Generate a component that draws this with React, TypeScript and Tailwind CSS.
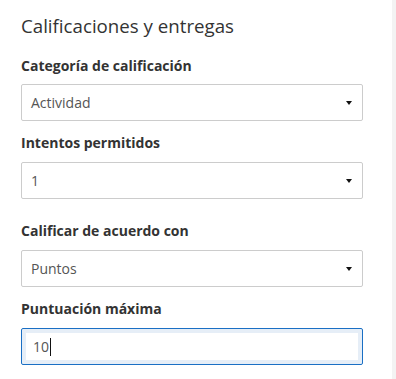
import React from "react";

function Caret() {
  return (
    <svg width="6" height="4" viewBox="0 0 6 4" className="shrink-0">
      <path d="M0 0 L6 0 L3 4 Z" fill="#111" />
    </svg>
  );
}

function SelectBox({ value }: { value: string }) {
  return (
    <div className="flex h-[37px] w-[342px] items-center justify-between rounded-[2px] border border-[#cccccc] bg-white pl-[9px] pr-[10px]">
      <span className="text-[14px] text-[#555555]">{value}</span>
      <Caret />
    </div>
  );
}

function Label({ children }: { children: React.ReactNode }) {
  return <div className="text-[14px] font-bold leading-[20px] text-[#333333]">{children}</div>;
}

export default function App() {
  return (
    <div className="flex h-[379px] w-[396px] bg-white" style={{ fontFamily: '"Open Sans", sans-serif' }}>
      <div className="flex w-[392px] flex-col pl-[21px] pt-[14px]">
        <div className="text-[18.7px] leading-[24px] text-[#333333]">Calificaciones y entregas</div>
        <div className="mt-[18px]">
          <Label>Categoría de calificación</Label>
        </div>
        <div className="mt-[8px]">
          <SelectBox value="Actividad" />
        </div>
        <div className="mt-[12px]">
          <Label>Intentos permitidos</Label>
        </div>
        <div className="mt-[9px]">
          <SelectBox value="1" />
        </div>
        <div className="mt-[22px]">
          <Label>Calificar de acuerdo con</Label>
        </div>
        <div className="mt-[9px]">
          <SelectBox value="Puntos" />
        </div>
        <div className="mt-[12px]">
          <Label>Puntuación máxima</Label>
        </div>
        <div className="mt-[9px]">
          <div className="flex h-[37px] w-[342px] items-center rounded-[2px] border border-[#1a6fc4] bg-white pl-[11px] shadow-[inset_0_0_0_4px_#e6eef7]">
            <span className="text-[14px] text-[#555555]">10</span>
            <span className="ml-[1px] inline-block h-[18px] w-[1px] bg-[#111]" />
          </div>
        </div>
      </div>
      <div className="w-[4px] bg-[#f3f3f3]" />
    </div>
  );
}
